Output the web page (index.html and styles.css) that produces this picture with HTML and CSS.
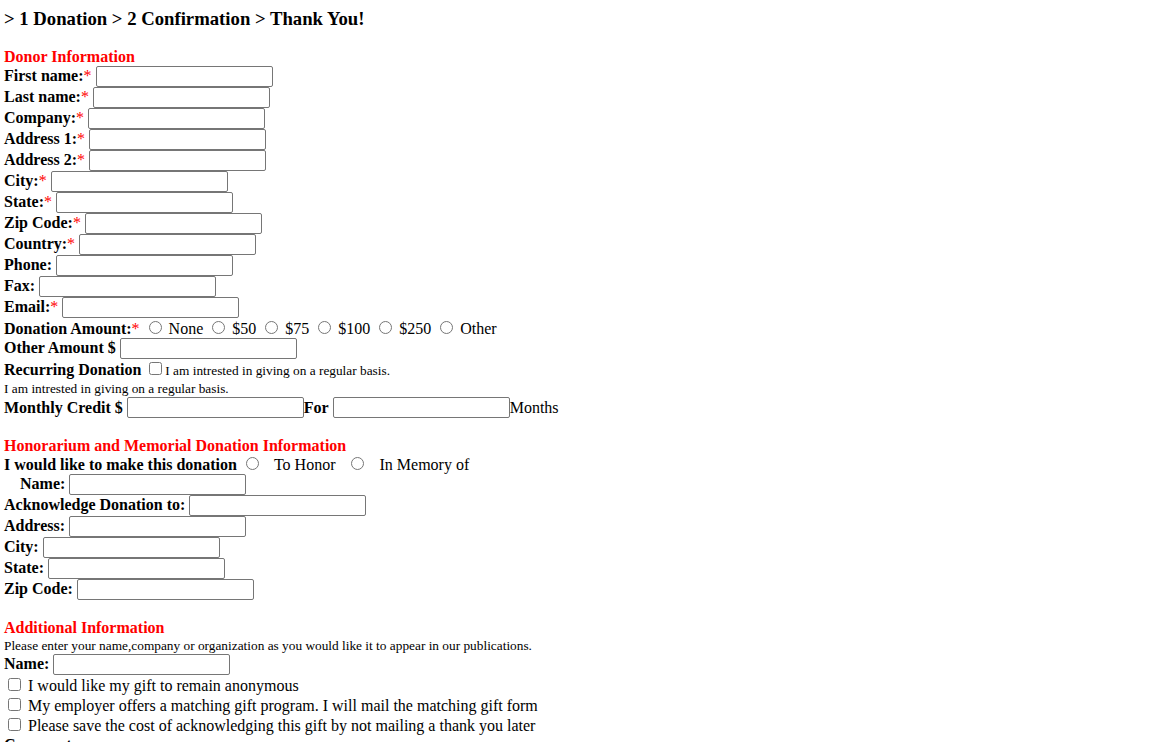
FILE: index.html
```html
<!DOCTYPE html>
<html>
<head>
<meta charset="utf-8">
<title>Donation</title>
<link rel="stylesheet" href="styles.css">
</head>
<body>
<div class="steps">&gt; 1 Donation &gt; 2 Confirmation &gt; Thank You!</div>

<div class="section-title">Donor Information</div>
<div class="row"><b>First name:</b><span class="req">*</span> <input class="text" type="text"></div>
<div class="row"><b>Last name:</b><span class="req">*</span> <input class="text" type="text"></div>
<div class="row"><b>Company:</b><span class="req">*</span> <input class="text" type="text"></div>
<div class="row"><b>Address 1:</b><span class="req">*</span> <input class="text" type="text"></div>
<div class="row"><b>Address 2:</b><span class="req">*</span> <input class="text" type="text"></div>
<div class="row"><b>City:</b><span class="req">*</span> <input class="text" type="text"></div>
<div class="row"><b>State:</b><span class="req">*</span> <input class="text" type="text"></div>
<div class="row"><b>Zip Code:</b><span class="req">*</span> <input class="text" type="text"></div>
<div class="row"><b>Country:</b><span class="req">*</span> <input class="text" type="text"></div>
<div class="row"><b>Phone:</b> <input class="text" type="text"></div>
<div class="row"><b>Fax:</b> <input class="text" type="text"></div>
<div class="row"><b>Email:</b><span class="req">*</span> <input class="text" type="text"></div>
<div class="row-opt"><b>Donation Amount:</b><span class="req">*</span> <input type="radio" name="amt"> None <input type="radio" name="amt"> $50 <input type="radio" name="amt"> $75 <input type="radio" name="amt"> $100 <input type="radio" name="amt"> $250 <input type="radio" name="amt"> Other</div>
<div class="row"><b>Other Amount $</b> <input class="text" type="text"></div>
<div class="row"><b>Recurring Donation</b> <input type="checkbox" class="cb"><span class="small">I am intrested in giving on a regular basis.</span></div>
<div class="small-row">I am intrested in giving on a regular basis.</div>
<div class="row row-low"><b>Monthly Credit $</b> <input class="text" type="text"><b>For</b> <input class="text" type="text">Months</div>

<div class="section-title later">Honorarium and Memorial Donation Information</div>
<div class="row-opt"><b>I would like to make this donation</b> <input type="radio" name="hon" class="wide"><span class="opt-label">To Honor</span> <input type="radio" name="hon" class="wide">In Memory of</div>
<div class="row indent"><b>Name:</b> <input class="text" type="text"></div>
<div class="row"><b>Acknowledge Donation to:</b> <input class="text" type="text"></div>
<div class="row"><b>Address:</b> <input class="text" type="text"></div>
<div class="row"><b>City:</b> <input class="text" type="text"></div>
<div class="row"><b>State:</b> <input class="text" type="text"></div>
<div class="row"><b>Zip Code:</b> <input class="text" type="text"></div>

<div class="section-title later">Additional Information</div>
<div class="small-note">Please enter your name,company or organization as you would like it to appear in our publications.</div>
<div class="row"><b>Name:</b> <input class="text" type="text"></div>
<div class="row-opt"><input type="checkbox"> I would like my gift to remain anonymous</div>
<div class="row-opt"><input type="checkbox"> My employer offers a matching gift program. I will mail the matching gift form</div>
<div class="row-opt"><input type="checkbox"> Please save the cost of acknowledging this gift by not mailing a thank you later</div>
<div class="row"><b>Comments:</b></div>
</body>
</html>
```
FILE: styles.css
```css
html, body {
  margin: 0;
  background: #fff;
}
body {
  padding: 8px 4px 0;
  font-family: "Liberation Serif", "Times New Roman", serif;
  font-size: 16px;
  color: #000;
}
.steps {
  font-size: 18.72px;
  font-weight: bold;
  line-height: 22px;
}
.section-title {
  margin-top: 18px;
  color: #ff0000;
  font-weight: bold;
  line-height: 18px;
}
.section-title.later {
  margin-top: 19px;
  line-height: 17px;
}
.row {
  line-height: 20px;
  height: 21px;
  white-space: nowrap;
}
.row-low {
  line-height: 21px;
}
.row-opt {
  line-height: 20px;
  height: 20px;
  white-space: nowrap;
}
.req {
  color: #ff0000;
}
.text {
  box-sizing: border-box;
  width: 177px;
  height: 21px;
  margin: 0;
  padding: 1px 2px;
  border: 1px solid #767676;
  border-radius: 2px;
  vertical-align: top;
  font: 13.33px Arial, sans-serif;
}
input[type="radio"], input[type="checkbox"] {
  width: 13px;
  height: 13px;
}
.cb {
  margin-right: 3px;
}
.small {
  font-size: 13.33px;
}
.small-row {
  font-size: 13.33px;
  line-height: 17px;
  height: 17px;
}
.small-note {
  font-size: 13.33px;
  line-height: 19px;
  height: 18px;
}
.wide {
  margin-right: 15px;
}
.opt-label {
  margin-right: 7px;
}
.indent {
  padding-left: 16px;
}
```
